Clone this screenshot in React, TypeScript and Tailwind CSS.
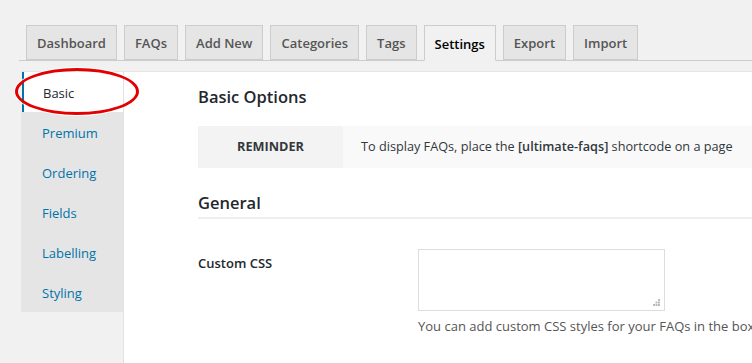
import React from "react"

const tabs = ["Dashboard", "FAQs", "Add New", "Categories", "Tags", "Settings", "Export", "Import"]
const sideItems = ["Basic", "Premium", "Ordering", "Fields", "Labelling", "Styling"]

export default function App() {
  return (
    <div
      className="w-[752px] h-[363px] overflow-hidden bg-[#f1f1f1] text-[#23282d]"
      style={{ fontFamily: '"Open Sans", "Noto Sans", sans-serif' }}
    >
      {/* tab bar */}
      <div className="ml-[19px] pt-[25px] flex border-b border-[#ccc] h-[61px]">
        {tabs.map((t) => {
          const active = t === "Settings"
          return (
            <div
              key={t}
              className={
                active
                  ? "ml-[7px] h-[36px] px-[10px] pt-[2px] border border-[#ccc] border-b-[#f1f1f1] bg-[#f1f1f1] text-black text-[13px] font-semibold leading-[33px] relative z-10"
                  : "ml-[7px] h-[35px] px-[10px] pt-[2px] border border-[#ccc] bg-[#e5e5e5] text-[#555] text-[13px] font-semibold leading-[31px]"
              }
            >
              {t}
            </div>
          )
        })}
      </div>

      <div className="ml-[21px] mt-[10px] border-t border-[#e5e5e5] flex h-[300px]">
        {/* sidebar */}
        <div className="w-[102px] shrink-0 flex flex-col">
          {sideItems.map((s) => {
            const active = s === "Basic"
            return (
              <div
                key={s}
                className={
                  active
                    ? "relative h-[40px] bg-white border-l-[2px] border-l-[#0073aa] ml-[1px] pl-[19px] pt-[4px] flex items-center text-[13px] text-[#23282d]"
                    : "h-[40px] bg-[#e5e5e5] pl-[21px] pt-[4px] flex items-center text-[13px] text-[#0073aa]"
                }
              >
                {s}
                {active && (
                  <div className="absolute left-[-9px] top-[-4px] w-[124px] h-[47px] rounded-[50%] border-[3px] border-[#e30000] shadow-[0_0_0_1px_#fff]" />
                )}
              </div>
            )
          })}
        </div>

        {/* content */}
        <div className="flex-1 min-w-0 bg-white border-l border-[#e2e2e2] pl-[74px]">
          <div className="pt-[14px] text-[16.5px] font-semibold text-[#23282d] leading-[22px]">Basic Options</div>

          <div className="mt-[18px] flex h-[42px] text-[12.7px]">
            <div className="w-[145px] shrink-0 bg-[#f3f3f3] flex items-center justify-center font-bold text-[#32373c]">
              REMINDER
            </div>
            <div className="flex-1 bg-[#f9f9f9] pl-[18px] flex items-center whitespace-nowrap text-[#32373c]">
              To display FAQs, place the&nbsp;<span className="font-semibold">[ultimate-faqs]</span>&nbsp;shortcode on a page
            </div>
          </div>

          <div className="mt-[24px] pb-[3px] border-b-2 border-[#eee] text-[16.5px] font-semibold leading-[22px]">
            General
          </div>

          <div className="mt-[30px] flex">
            <div className="w-[220px] shrink-0 pt-[5px] text-[13px] font-semibold text-[#23282d]">Custom CSS</div>
            <div className="min-w-0">
              <div className="relative w-[247px] h-[62px] border border-[#ddd] bg-white">
                <svg className="absolute right-[4px] bottom-[4px]" width="7" height="7" viewBox="0 0 7 7">
                  <rect x="5" y="0" width="2" height="2" fill="#bbb" />
                  <rect x="5" y="2.5" width="2" height="2" fill="#bbb" />
                  <rect x="2.5" y="2.5" width="2" height="2" fill="#bbb" />
                  <rect x="5" y="5" width="2" height="2" fill="#bbb" />
                  <rect x="2.5" y="5" width="2" height="2" fill="#bbb" />
                  <rect x="0" y="5" width="2" height="2" fill="#bbb" />
                </svg>
              </div>
              <div className="mt-[6px] text-[13px] text-[#555] whitespace-nowrap">
                You can add custom CSS styles for your FAQs in the box above.
              </div>
            </div>
          </div>
        </div>
      </div>
    </div>
  )
}
